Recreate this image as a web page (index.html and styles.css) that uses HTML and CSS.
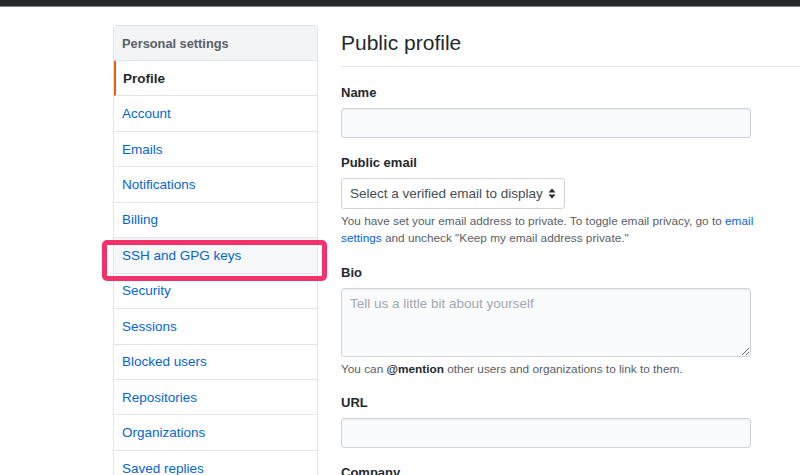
FILE: index.html
```html
<!DOCTYPE html>
<html lang="en">
<head>
<meta charset="utf-8">
<title>Public profile</title>
<link rel="stylesheet" href="styles.css">
</head>
<body>
<div class="topbar"></div>
<div class="layout">
  <nav class="menu">
    <div class="menu-heading">Personal settings</div>
    <a class="menu-item selected" href="#">Profile</a>
    <a class="menu-item" href="#">Account</a>
    <a class="menu-item" href="#">Emails</a>
    <a class="menu-item" href="#">Notifications</a>
    <a class="menu-item" href="#">Billing</a>
    <a class="menu-item hovered" href="#">SSH and GPG keys<span class="highlight"></span></a>
    <a class="menu-item" href="#">Security</a>
    <a class="menu-item" href="#">Sessions</a>
    <a class="menu-item" href="#">Blocked users</a>
    <a class="menu-item" href="#">Repositories</a>
    <a class="menu-item" href="#">Organizations</a>
    <a class="menu-item" href="#">Saved replies</a>
  </nav>
  <main class="main">
    <h2 class="subhead">Public profile</h2>
    <div class="form-group">
      <label class="label">Name</label>
      <input class="form-control" type="text">
    </div>
    <div class="form-group">
      <label class="label">Public email</label>
      <div class="select">
        <span>Select a verified email to display</span>
        <svg class="select-arrow" width="8" height="11" viewBox="0 0 8 11"><path d="M4 0.5L7.5 4.5H0.5Z" fill="#24292e"/><path d="M4 10.5L7.5 6.5H0.5Z" fill="#24292e"/></svg>
      </div>
      <p class="note">You have set your email address to private. To toggle email privacy, go to <a href="#">email settings</a> and uncheck "Keep my email address private."</p>
    </div>
    <div class="form-group bio-group">
      <label class="label">Bio</label>
      <textarea class="form-control textarea" placeholder="Tell us a little bit about yourself"></textarea>
      <p class="note">You can <strong>@mention</strong> other users and organizations to link to them.</p>
    </div>
    <div class="form-group">
      <label class="label">URL</label>
      <input class="form-control" type="text">
    </div>
    <div class="form-group">
      <label class="label">Company</label>
      <input class="form-control" type="text">
    </div>
  </main>
</div>
</body>
</html>
```
FILE: styles.css
```css
* { box-sizing: border-box; }
html, body { margin: 0; padding: 0; background: #fff; }
body {
  font-family: "Liberation Sans", Arial, sans-serif;
  font-size: 13.5px;
  color: #24292e;
  overflow: hidden;
  height: 475px;
}
.topbar {
  height: 7px;
  background: #24292e;
  border-bottom: 1px solid #80868c;
}
.layout {
  display: flex;
  padding: 18px 0 0 113px;
  gap: 23px;
}
.menu {
  width: 205px;
  flex: none;
  border: 1px solid #e1e4e8;
  border-radius: 3px;
  align-self: flex-start;
}
.menu-heading {
  height: 35px;
  display: flex;
  align-items: center;
  padding-left: 8px;
  background: #f3f4f6;
  border-bottom: 1px solid #e1e4e8;
  color: #586069;
  font-weight: bold;
  font-size: 12.8px;
  border-radius: 3px 3px 0 0;
}
.menu-item {
  position: relative;
  display: flex;
  align-items: center;
  height: 35.45px;
  padding-left: 8px;
  border-bottom: 1px solid #e1e4e8;
  color: #0366d6;
  text-decoration: none;
}
.menu-item.selected {
  color: #24292e;
  font-weight: bold;
  border-left: 2px solid #e36209;
  padding-left: 7px;
}
.menu-item.hovered { background: #f6f8fa; }
.highlight {
  position: absolute;
  left: -12px;
  top: 2px;
  width: 225px;
  height: 41px;
  border: 5px solid #f5316b;
  border-radius: 5px;
}
.main { flex: 1; min-width: 0; }
.subhead {
  margin: 0;
  padding: 3px 0 9px;
  font-size: 21px;
  font-weight: normal;
  line-height: 29px;
  border-bottom: 1px solid #e1e4e8;
}
.form-group { margin-top: 15px; }
.subhead + .form-group { margin-top: 16px; }
.form-group.bio-group { margin-top: 16px; }
.label {
  display: block;
  font-weight: bold;
  font-size: 13px;
  line-height: 20px;
  margin-bottom: 5px;
}
.form-control {
  display: block;
  width: 410px;
  height: 30px;
  margin: 0;
  padding: 6px 8px;
  font-family: inherit;
  font-size: 13.5px;
  color: #24292e;
  background: #fafbfc;
  border: 1px solid #d1d5da;
  border-radius: 3px;
  box-shadow: inset 0 1px 2px rgba(27,31,35,0.075);
  outline: none;
}
.textarea {
  height: 69px;
  resize: vertical;
  line-height: 17px;
}
.textarea::placeholder { color: #a3a8ae; }
.select {
  display: flex;
  align-items: center;
  justify-content: space-between;
  width: 224px;
  height: 31px;
  padding: 0 8px 0 8px;
  background: #fff;
  border: 1px solid #d1d5da;
  border-radius: 3px;
  color: #444d56;
}
.select-arrow { flex: none; }
.note {
  margin: 4px 0 0;
  font-size: 11.8px;
  line-height: 17px;
  color: #586069;
  max-width: 430px;
}
.note a { color: #0366d6; text-decoration: none; }
.note strong { color: #24292e; }
```
